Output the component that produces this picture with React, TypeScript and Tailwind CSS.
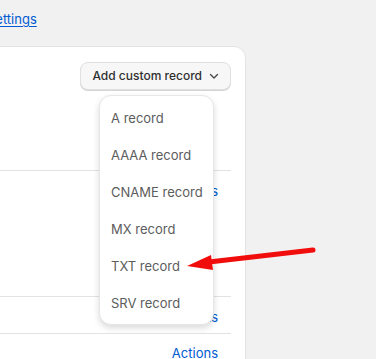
import React from 'react';

const recordTypes = ['A record', 'AAAA record', 'CNAME record', 'MX record', 'TXT record', 'SRV record'];

const Chevron: React.FC = () => (
  <svg width="10" height="10" viewBox="0 0 10 10" fill="none" className="ml-[7px]">
    <path d="M1.5 3.5 5 7l3.5-3.5" stroke="#4a4a4a" strokeWidth="1.4" strokeLinecap="round" strokeLinejoin="round" />
  </svg>
);

const App: React.FC = () => {
  return (
    <div
      className="relative w-[376px] h-[359px] overflow-hidden bg-[#f1f1f1]"
      style={{ fontFamily: 'Inter, "Noto Sans", sans-serif' }}
    >
      {/* Breadcrumb link, clipped at the left edge */}
      <div className="pt-[6px] -ml-[13px] h-[46px]">
        <a className="text-[13px] text-[#005bd3] underline underline-offset-2 leading-[20px]">Settings</a>
      </div>

      {/* Card */}
      <div className="-ml-[20px] w-[266px] h-[400px] bg-white rounded-[12px] border border-[#e3e3e3] pr-[14px]">
        <div className="h-[123px] flex justify-end pt-[15px]">
          <button className="h-[28px] flex items-center pl-[11px] pr-[11px] rounded-[8px] bg-[#f7f7f7] border border-[#e0e0e0] shadow-[0_1px_0_#d4d4d4] text-[12px] font-medium text-[#303030]">
            Add custom record
            <Chevron />
          </button>
        </div>
        <div className="h-[126px] border-t border-[#e3e3e3] flex justify-end pt-[10px] pr-[13px]">
          <span className="text-[13px] text-[#005bd3] leading-[20px]">Actions</span>
        </div>
        <div className="h-[37px] border-t border-[#e3e3e3] flex justify-end pt-[10px] pr-[13px]">
          <span className="text-[13px] text-[#005bd3] leading-[20px]">Actions</span>
        </div>
        <div className="h-[60px] border-t border-[#e3e3e3] flex justify-end pt-[9px] pr-[13px]">
          <span className="text-[13px] text-[#005bd3] leading-[20px]">Actions</span>
        </div>
      </div>

      {/* Dropdown menu */}
      <div className="absolute left-[99px] top-[95px] w-[115px] rounded-[12px] bg-white border border-[#e6e6e6] shadow-[0_3px_6px_rgba(0,0,0,0.15)] pt-[4px] pb-[2px] px-[11px]">
        {recordTypes.map(t => (
          <div key={t} className="h-[37px] flex items-center text-[13px] text-[#5c5c5c] whitespace-nowrap">
            {t}
          </div>
        ))}
      </div>

      {/* Annotation arrow */}
      <svg className="absolute left-0 top-0" width="376" height="359" viewBox="0 0 376 359">
        <line x1="209" y1="262" x2="313" y2="250" stroke="#f20d0d" strokeWidth="5" strokeLinecap="round" />
        <polygon points="187,266 211,255 213,270" fill="#f20d0d" />
      </svg>
    </div>
  );
};

export default App;
